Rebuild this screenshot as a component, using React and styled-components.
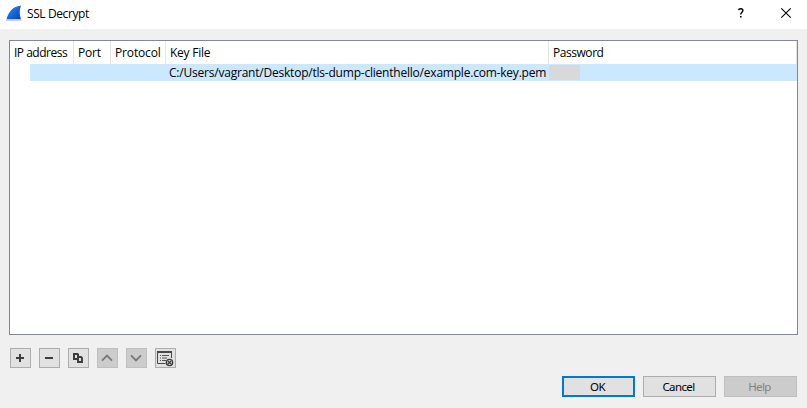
import React from "react";
import styled, { createGlobalStyle } from "styled-components";

const GlobalStyle = createGlobalStyle`
  * { box-sizing: border-box; }
  body { margin: 0; background: #f0f0f0; overflow: hidden; }
`;

const Dialog = styled.div`
  width: 807px;
  height: 408px;
  display: flex;
  flex-direction: column;
  background: #f0f0f0;
  color: #000;
  font: 12px/16px "Open Sans", "Noto Sans", sans-serif;
`;

const TitleBar = styled.header`
  height: 29px;
  flex: none;
  display: flex;
  align-items: center;
  padding: 0 15px 3px 6px;
  background: #fff;
`;

const Label = styled.span`
  white-space: pre;
  letter-spacing: ${(p) => p.$spacing || 0}px;
`;

const Title = styled.h1`
  margin: 1px auto 0 5px;
  font-size: 12px;
  font-weight: 400;
`;

const TitleActions = styled.div`
  display: flex;
  align-items: center;
  gap: 35px;
`;

const Table = styled.section`
  width: 789px;
  height: 295px;
  flex: none;
  margin: 11px 0 0 9px;
  border: 1px solid #828790;
  background: #fff;
`;

const HeaderRow = styled.div`
  display: grid;
  grid-template-columns: 64px 37px 55px 383px 1fr;
  height: 23px;
`;

const HeaderCell = styled.div`
  padding: 4px 0 0 4px;
  border-right: 1px solid #e5e5e5;
`;

const DataRow = styled.div`
  display: grid;
  grid-template-columns: 44px 37px 55px 383px 1fr;
  height: 17px;
  margin-left: 20px;
  background: #cce8ff;
`;

const DataCell = styled.div`
  padding-left: 3px;
  line-height: 17px;
`;

const PasswordCell = styled.div`
  display: flex;
  align-items: center;
`;

const PasswordMask = styled.div`
  width: 31px;
  height: 15px;
  background: #d9d9d9;
`;

const Toolbar = styled.div`
  display: flex;
  gap: 8px;
  margin: 13px 0 0 10px;
`;

const ToolButton = styled.button`
  width: 21px;
  height: 20px;
  padding: 0;
  display: flex;
  align-items: center;
  justify-content: center;
  border: 1px solid ${(p) => (p.disabled ? "#bfbfbf" : "#adadad")};
  background: ${(p) => (p.disabled ? "#cccccc" : "#e1e1e1")};
`;

const Footer = styled.footer`
  display: flex;
  justify-content: flex-end;
  gap: 8px;
  padding: 8px 10px 0 0;
`;

const PushButton = styled.button`
  width: 73px;
  height: 21px;
  padding: 1px 2px 0 0;
  border: ${(p) => (p.$primary ? "2px solid #0078d7" : `1px solid ${p.disabled ? "#bfbfbf" : "#adadad"}`)};
  background: ${(p) => (p.disabled ? "#cccccc" : "#e1e1e1")};
  color: ${(p) => (p.disabled ? "#838383" : "#000")};
  font: 11.5px/14px "Noto Sans", sans-serif;
  letter-spacing: -0.6px;
`;

const FinIcon = () => (
  <svg width="16" height="17" viewBox="0 0 16 17">
    <defs>
      <linearGradient id="fin" x1="0" y1="0" x2="1" y2="1">
        <stop offset="0" stopColor="#3c8cec" />
        <stop offset="0.55" stopColor="#1463d8" />
        <stop offset="1" stopColor="#0843ae" />
      </linearGradient>
    </defs>
    <path d="M.5 14.6C2 8.5 5.3 1.7 15.2.6C13.4 4 13.3 10 15.2 14.6Z" fill="url(#fin)" />
    <path d="M.2 14.1H15.3V15.8H0Z" fill="#b9c4d2" />
  </svg>
);

const Glyph = ({ children }) => (
  <svg width="19" height="18" viewBox="0 0 19 18" fill="none">{children}</svg>
);

const tools = [
  { name: "Add", icon: <path d="M5 9h8M9 5v8" stroke="#3c3c3c" strokeWidth="2" /> },
  { name: "Remove", icon: <path d="M5 9h8" stroke="#3c3c3c" strokeWidth="2" /> },
  {
    name: "Copy",
    icon: (
      <>
        <path d="M5 5h3.5l.5.5V10H5Z" stroke="#3c3c3c" strokeWidth="2" />
        <path d="M9 8h3l1 1v4H9Z" fill="#e1e1e1" stroke="#3c3c3c" strokeWidth="1.9" />
      </>
    ),
  },
  { name: "Move up", disabled: true, icon: <path d="M4 11.6l5-5 5 5" stroke="#777" strokeWidth="1.8" /> },
  { name: "Move down", disabled: true, icon: <path d="M4 6.4l5 5 5-5" stroke="#777" strokeWidth="1.8" /> },
  {
    name: "Clear",
    icon: (
      <>
        <path d="M15.5 9V2.5h-14v12h8" stroke="#484848" />
        <path d="M1 3h15" stroke="#484848" strokeWidth="2" />
        <path d="M4 6.5h1M6 6.5h7M4 9h1M6 9h5M4 11.5h1M6 11.5h4" stroke="#555" />
        <circle cx="13.5" cy="13.5" r="3.1" fill="#e1e1e1" stroke="#3c3c3c" strokeWidth="1.4" />
        <path d="M12 12l3 3m0-3l-3 3" stroke="#3c3c3c" strokeWidth="1.2" />
      </>
    ),
  },
];

const headers = [
  ["IP address", -0.5],
  ["Port", -0.2],
  ["Protocol", -0.15],
  ["Key File", -0.25],
  ["Password", -0.45],
];

export default function App() {
  return (
    <Dialog>
      <GlobalStyle />
      <TitleBar>
        <FinIcon />
        <Title><Label $spacing={-0.4}>SSL Decrypt</Label></Title>
        <TitleActions>
          <svg width="7" height="10" viewBox="0 0 7 10" fill="none">
            <path d="M.7 2.1C.8.2 4.9.2 4.9 2.5C4.9 4.2 2.7 4.2 2.7 6.6" stroke="#000" strokeWidth="1.4" />
            <path d="M2 8h1.6v1.6H2Z" fill="#000" />
          </svg>
          <svg width="12" height="12" viewBox="0 0 12 12" fill="none">
            <path d="M1.3 1.3l9.4 9.4M10.7 1.3L1.3 10.7" stroke="#000" strokeWidth="1.1" />
          </svg>
        </TitleActions>
      </TitleBar>
      <Table>
        <HeaderRow>
          {headers.map(([name, spacing]) => (
            <HeaderCell key={name}><Label $spacing={spacing}>{name}</Label></HeaderCell>
          ))}
        </HeaderRow>
        <DataRow>
          <DataCell /><DataCell /><DataCell />
          <DataCell>
            <Label $spacing={-0.215}>C:/Users/vagrant/Desktop/tls-dump-clienthello/example.com-key.pem</Label>
          </DataCell>
          <PasswordCell><PasswordMask /></PasswordCell>
        </DataRow>
      </Table>
      <Toolbar>
        {tools.map((t) => (
          <ToolButton key={t.name} aria-label={t.name} disabled={t.disabled}>
            <Glyph>{t.icon}</Glyph>
          </ToolButton>
        ))}
      </Toolbar>
      <Footer>
        <PushButton $primary>OK</PushButton>
        <PushButton>Cancel</PushButton>
        <PushButton disabled>Help</PushButton>
      </Footer>
    </Dialog>
  );
}
